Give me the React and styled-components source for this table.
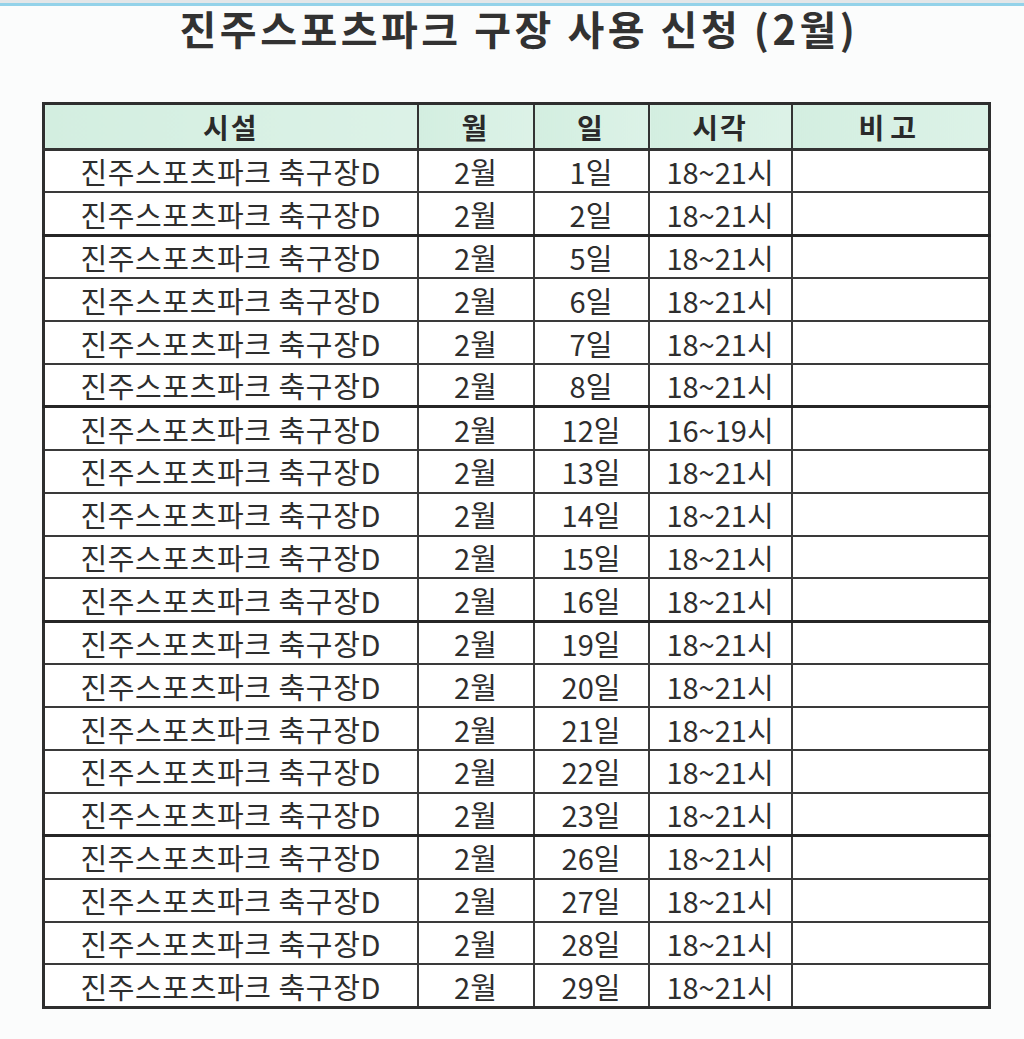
import React from 'react';
import styled, { createGlobalStyle } from 'styled-components';

const GlobalStyle = createGlobalStyle`
  html, body {
    margin: 0;
    padding: 0;
    background: #fbfcfc;
  }
  body {
    font-family: "Noto Sans CJK KR", "Noto Sans", sans-serif;
    color: #2b2b2b;
  }
`

const Page = styled.div`
  width: 1024px;
  height: 1039px;
  overflow: hidden;
  border-top: 3px solid #e3e6e8;
`

const TopRule = styled.div`
  height: 3px;
  background: #93d2e9;
`

const Title = styled.h1`
  margin: 0;
  padding: 0 0 0 14px;
  height: 96px;
  box-sizing: border-box;
  text-align: center;
  font-size: 40px;
  font-weight: 700;
  line-height: 44px;
  letter-spacing: 3.5px;
  color: #323232;
`

const Table = styled.table`
  margin-left: 42px;
  width: 946px;
  border-collapse: collapse;
  table-layout: fixed;
  border: 3px solid #2e2e2e;
  background: #fff;
`

const HeadCell = styled.th`
  height: 43px;
  padding: 0;
  border: 2px solid #333;
  border-bottom-width: 3px;
  background: linear-gradient(90deg, #d3eee0, #dcf2e7);
  font-size: 28px;
  font-weight: 700;
  color: #2a2a2a;
  text-align: center;
  letter-spacing: ${p => p.$spacing || '2px'};
  white-space: nowrap;
`

const Row = styled.tr`
  height: 42.9px;
`

const Cell = styled.td`
  padding: 0;
  border: 2px solid #3a3a3a;
  border-top: ${p => (p.$weekStart ? '3px solid #262626' : '2px solid #3a3a3a')};
  text-align: center;
  font-size: 29px;
  line-height: 38px;
  letter-spacing: ${p => p.$spacing || '0'};
  white-space: nowrap;
  color: #2e2e2e;
`

const COLUMNS = [
  { label: '시설', width: 374 },
  { label: '월', width: 116 },
  { label: '일', width: 115 },
  { label: '시각', width: 143 },
  { label: '비고', width: 198, spacing: '6px' },
]

const DAYS = [1, 2, 5, 6, 7, 8, 12, 13, 14, 15, 16, 19, 20, 21, 22, 23, 26, 27, 28, 29]
const WEEK_STARTS = [5, 12, 19, 26]

export default function App() {
  return (
    <Page>
      <GlobalStyle />
      <TopRule />
      <Title>진주스포츠파크 구장 사용 신청 (2월)</Title>
      <Table>
        <colgroup>
          {COLUMNS.map(c => <col key={c.label} style={{ width: c.width }} />)}
        </colgroup>
        <thead>
          <tr>
            {COLUMNS.map(c => <HeadCell key={c.label} $spacing={c.spacing}>{c.label}</HeadCell>)}
          </tr>
        </thead>
        <tbody>
          {DAYS.map(day => {
            const week = WEEK_STARTS.includes(day);
            return (
              <Row key={day}>
                <Cell $weekStart={week} $spacing="0.6px">진주스포츠파크 축구장D</Cell>
                <Cell $weekStart={week}>2월</Cell>
                <Cell $weekStart={week}>{day}일</Cell>
                <Cell $weekStart={week}>{day === 12 ? '16~19시' : '18~21시'}</Cell>
                <Cell $weekStart={week}></Cell>
              </Row>
            );
          })}
        </tbody>
      </Table>
    </Page>
  );
}
